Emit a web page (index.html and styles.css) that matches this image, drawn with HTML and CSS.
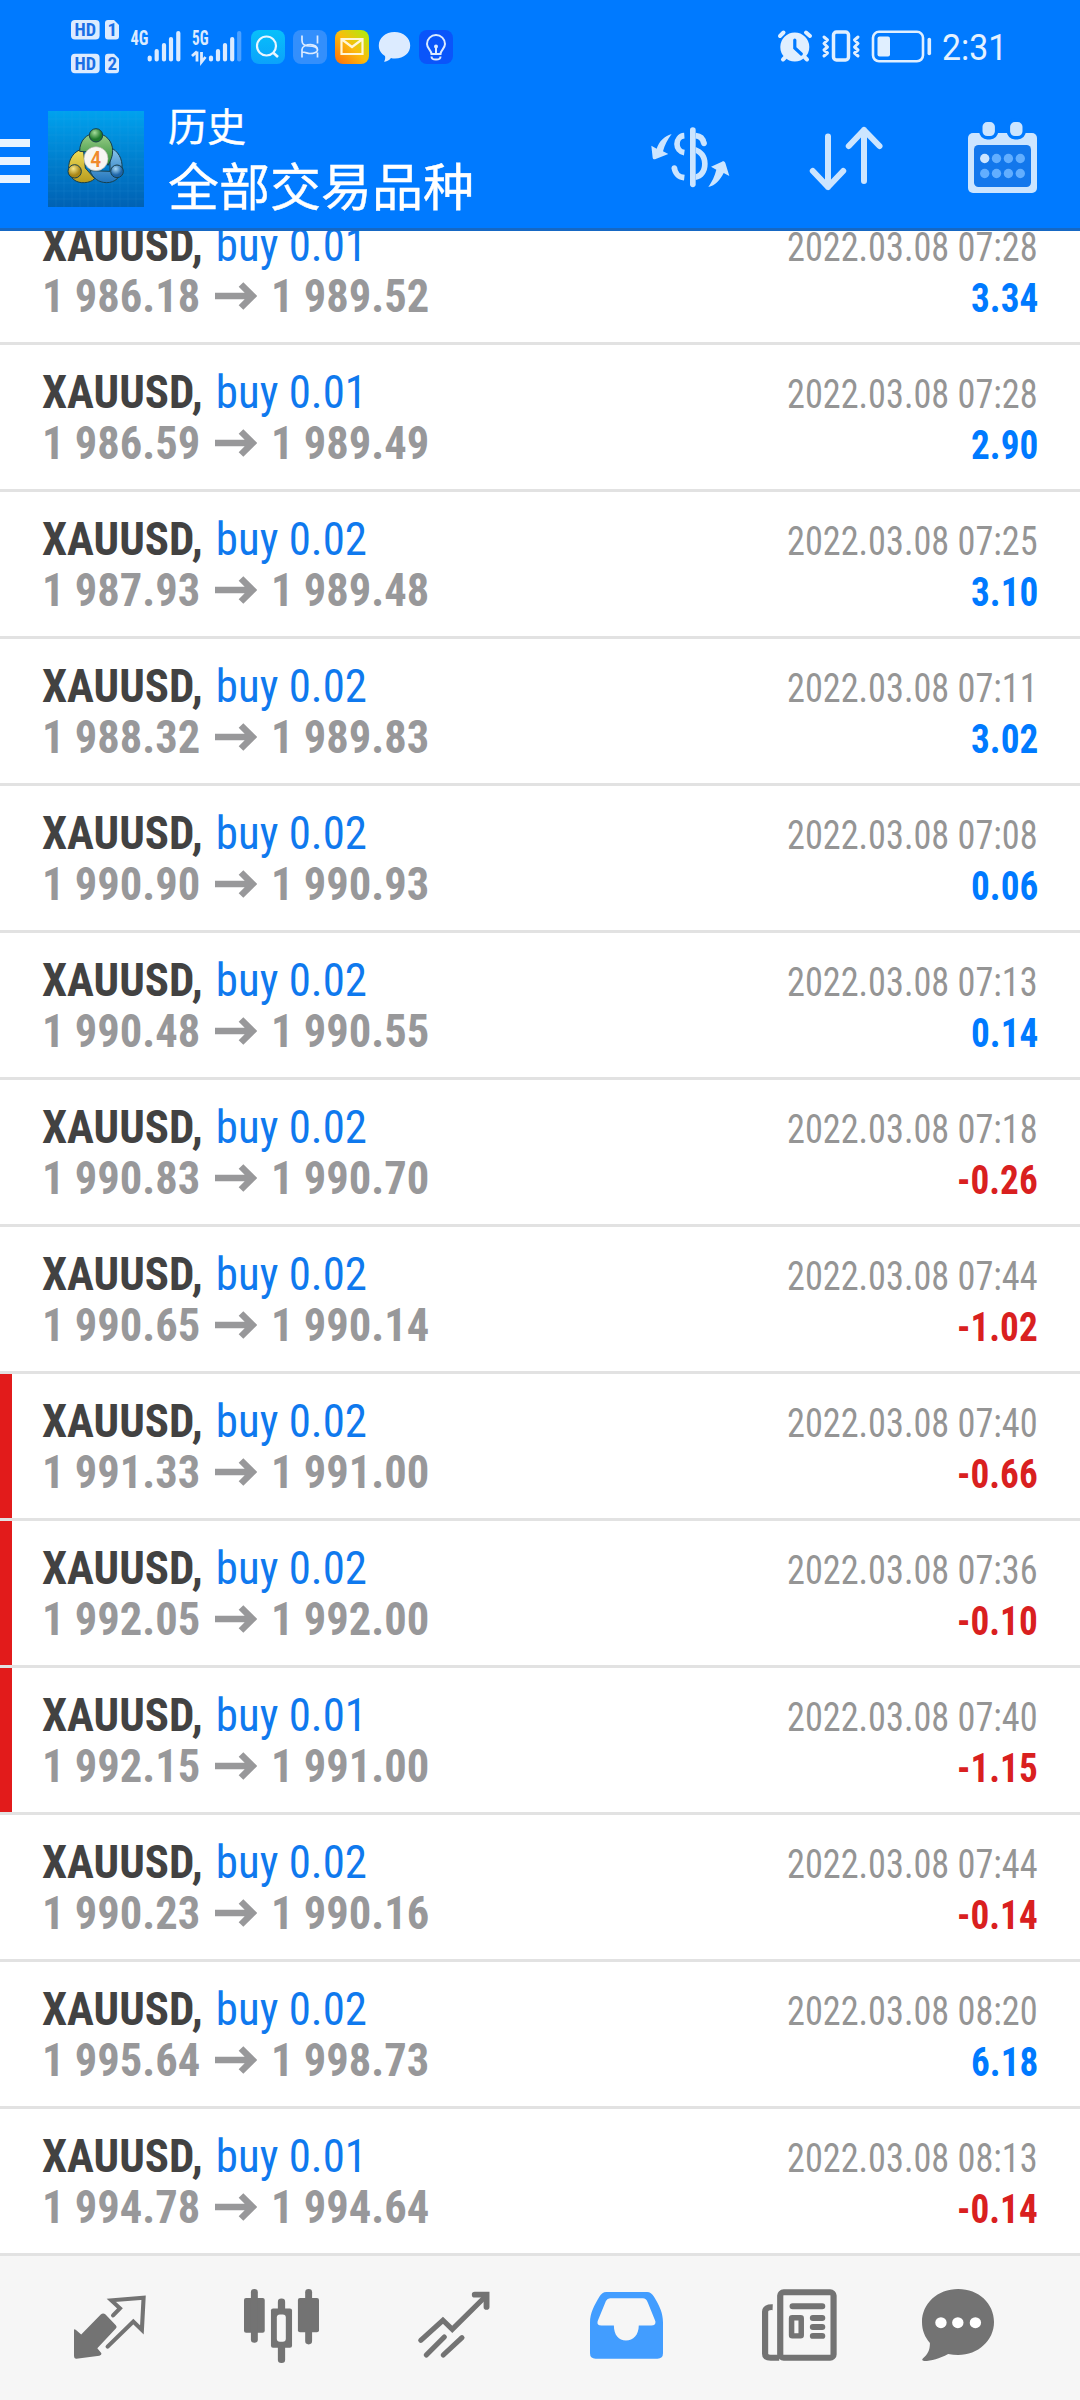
FILE: index.html
```html
<!DOCTYPE html>
<html lang="zh-CN">
<head>
<meta charset="utf-8">
<title>历史</title>
<link rel="stylesheet" href="styles.css">
</head>
<body>
<svg class="defs" aria-hidden="true">
  <symbol id="arrow" viewBox="0 0 42 28"><path d="M0 14H36M26 2.5L37.5 14L26 25.5" fill="none" stroke="#98989a" stroke-width="6.6"/></symbol>
</svg>
<header class="top">
  <div class="status">
    <svg class="hd" viewBox="71 20 48 54" width="48" height="54">
      <g fill="#dcebff"><rect x="71" y="20" width="28.6" height="19.5" rx="4"/><path d="M108 20h6l5 5v11.500a3 3 0 0 1-3 3h-8a3 3 0 0 1-3-3V23a3 3 0 0 1 3-3z"/><rect x="71" y="53.800" width="28.600" height="19.500" rx="4"/><path d="M108 53.800h6l5 5v11.500a3 3 0 0 1-3 3h-8a3 3 0 0 1-3-3V56.800a3 3 0 0 1 3-3z"/></g>
      <g class="badge"><text x="74.500" y="36.200" textLength="21.500" lengthAdjust="spacingAndGlyphs">HD</text><text x="107.500" y="36.200">1</text><text x="74.500" y="70" textLength="21.500" lengthAdjust="spacingAndGlyphs">HD</text><text x="107.500" y="70">2</text></g>
    </svg>
    <svg class="sig1" viewBox="130 30 52 32" width="52" height="32">
      <text class="net" x="130.500" y="45" textLength="18" lengthAdjust="spacingAndGlyphs">4G</text>
      <path class="bars" d="M149.700 57.500v2M156.700 51v8.500M164 45v14.500M171 39v20.500M178.300 33v26.500"/>
    </svg>
    <svg class="sig2" viewBox="191 30 52 33" width="52" height="33">
      <text class="net" x="192" y="45" textLength="16.500" lengthAdjust="spacingAndGlyphs">5G</text>
      <path class="bars" d="M211 57.500v2M218 51v8.500M225 45v14.500M232.200 39v20.500"/><path class="bars" opacity=".35" d="M239.200 33v26.500"/>
      <path d="M192 56l5-4.500M197 51.500v10M201.500 52v10l4-5" fill="none" stroke="#dcebff" stroke-width="2.800"/>
    </svg>
    <svg class="apps" viewBox="251 29 203 36" width="203" height="36">
      <defs>
        <linearGradient id="s1" x2="0" y2="1"><stop stop-color="#08c0fa"/><stop offset="1" stop-color="#0ba2fb"/></linearGradient>
        <linearGradient id="s2" x1="0" y1="1" x2="1" y2="0"><stop stop-color="#ff6a0a"/><stop offset=".5" stop-color="#fbbd0c"/><stop offset="1" stop-color="#a5f010"/></linearGradient>
      </defs>
      <rect x="251" y="30" width="34" height="34" rx="8" fill="url(#s1)"/>
      <circle cx="266.500" cy="46" r="9.500" fill="none" stroke="#eaf6ff" stroke-width="2.200"/><path d="M273 52.500l5 4.500" stroke="#eaf6ff" stroke-width="2.600"/>
      <rect x="293" y="30" width="34" height="34" rx="8" fill="#338ffc"/>
      <path d="M302 36v5c0 4 3 5.500 7 5.500 5 0 8.500 1 8.500 4.500M302 52.500c4 0 5 1.500 8 1.500s7.500-1 7.500-4-3-5-7-5-8.500 2-8.500 5v8M317.500 36v8M317.500 53v5" fill="none" stroke="#dcebff" stroke-width="1.700" transform="translate(0 -.5)"/>
      <rect x="335" y="30" width="34" height="34" rx="8" fill="url(#s2)"/>
      <path d="M341.500 39h21v15h-21zM342 39.500l10 7.500 10-7.500" fill="none" stroke="#fff6d8" stroke-width="2.200"/>
      <path d="M394.500 32c9 0 15.700 6 15.700 13.500S404 58.500 395 58.500c-1.500 0-3 0-4-.5-2 2.500-4.500 3.800-7 3.800 1-1.500 1.500-3.500 1-5.800-4-2.300-6.200-6-6.200-10.500C378.800 38 385.500 32 394.500 32z" fill="#dcebff"/>
      <rect x="419" y="30" width="34" height="34" rx="8" fill="#0a55fa"/>
      <path d="M431.500 54c0-3.500-4.500-5.500-4.500-10a9 9 0 0 1 18 0c0 4.500-4.500 6.500-4.500 10zM431.500 56.500c0 3 2 3 4.500 3s4.500 0 4.500-3M436 47v6" fill="none" stroke="#dcebff" stroke-width="2"/><circle cx="436" cy="46.500" r="2" fill="#dcebff"/>
    </svg>
    <svg class="sys" viewBox="778 29 154 35" width="154" height="35">
      <g fill="none" stroke="#e0efff" stroke-linecap="round">
        <circle cx="794.800" cy="47" r="14.500" fill="#e0efff" stroke="none"/>
        <path stroke-width="4" d="M780 36l3.500-3.500M806 32.500l4 3.500M783 59.500l2-2M807 59.500l-2-2"/>
        <path stroke="#007aff" stroke-width="3.200" d="M794.800 40v8l6.500 6"/>
        <rect x="833.500" y="32" width="15" height="28" rx="3" stroke-width="3.500"/>
        <path stroke-width="3" stroke-linejoin="round" d="M824 37l3.500 3-3.500 3.500 3.500 3.500-3.500 3 3.500 3-3.500 3M858 37l-3.500 3 3.500 3.500-3.500 3.500 3.500 3-3.500 3 3.500 3"/>
        <rect x="873" y="31.800" width="50" height="29.500" rx="6" stroke-width="2.600"/>
        <rect x="877.500" y="36.500" width="12.500" height="20" rx="2" fill="#e0efff" stroke="none"/>
        <path stroke-width="3.600" d="M929.300 39.500v14"/>
      </g>
    </svg>
    <time class="clock">2:31</time>
  </div>
  <div class="bar">
    <svg class="menu" width="30" height="44" viewBox="0 0 30 44"><path fill="#e9f4ff" d="M0 0h30v8H0zM0 18h30v8H0zM0 36h30v8H0z"/></svg>
    <svg class="logo" viewBox="24 21 288 288" width="96" height="96">
      <defs>
        <linearGradient id="bg" x2="0" y2="1"><stop stop-color="#00a2ee"/><stop offset=".5" stop-color="#0080cf"/><stop offset="1" stop-color="#0061b3"/></linearGradient>
        <linearGradient id="gr" x2="0" y2="1"><stop stop-color="#9ccf8a"/><stop offset="1" stop-color="#2c8a34"/></linearGradient>
        <linearGradient id="ye" x2="0" y2="1"><stop stop-color="#f1e05c"/><stop offset="1" stop-color="#b79a1c"/></linearGradient>
        <linearGradient id="bl" x2="0" y2="1"><stop stop-color="#8cc9ee"/><stop offset="1" stop-color="#1f72ba"/></linearGradient>
        <radialGradient id="gb" cx=".4" cy=".3"><stop stop-color="#a4dd9a"/><stop offset="1" stop-color="#1f7a2c"/></radialGradient>
        <radialGradient id="yb" cx=".4" cy=".3"><stop stop-color="#f7e88a"/><stop offset="1" stop-color="#a98616"/></radialGradient>
        <radialGradient id="bb" cx=".4" cy=".3"><stop stop-color="#a8d9f6"/><stop offset="1" stop-color="#1c64a8"/></radialGradient>
      </defs>
      <path fill="url(#bg)" d="M24 21h288v288H24z"/>
      <path stroke="#4ab5ea" stroke-opacity=".16" stroke-width="2" d="M48 21v288M72 21v288M96 21v288M120 21v288M144 21v288M168 21v288M192 21v288M216 21v288M240 21v288M264 21v288M288 21v288M24 45h288M24 69h288M24 93h288M24 117h288M24 141h288M24 165h288M24 189h288M24 213h288M24 237h288M24 261h288M24 285h288"/>
      <g stroke="#173f4c" stroke-width="3">
        <path fill="url(#bl)" d="M210 130c24 10 38 34 36 62-2 28-22 44-46 44-24 0-42-14-50-36l60 2z"/>
        <path fill="url(#ye)" d="M130 134c-28 6-46 32-44 62 2 28 24 42 48 40 12-1 22-4 30-12l-28-32z"/>
        <path fill="url(#gr)" d="M119 142c0-32 20-54 49-54s50 24 50 52c0 18-6 30-14 44l-16-36z"/>
        <circle cx="168" cy="94" r="20" fill="url(#gb)"/><circle cx="104" cy="202" r="20" fill="url(#yb)"/><circle cx="231" cy="202" r="19" fill="url(#bb)"/>
      </g>
      <circle cx="168" cy="164" r="36" fill="#f8f6f2" stroke="#b9b9b0" stroke-width="2"/>
      <text x="167" y="188" class="four">4</text>
    </svg>
    <div class="titles"><div class="t1">历史</div><div class="t2">全部交易品种</div></div>
    <svg class="money" viewBox="30 30 240 186" width="80" height="62" fill="none" stroke="#cce5ff" stroke-width="17">
      <path stroke-linecap="round" d="M158.500 42v163"/>
      <path d="M133 59c-14 1-22 13-22 25s8 24 22 26M103 154c1 16 12 29 30 31M167 59c13 1 22 8 24 22" />
      <path fill="#cce5ff" stroke="none" d="M167 93c22 8 36 24 36 50 0 28-14 44-36 49v-17c11-4 19-14 19-32 0-16-8-26-19-32zM95 54C72 62 58 75 50 98l-16-9 4 36c1 5 5 6 9 4l38-15-16-8c5-19 13-35 26-52zM205 213c21-4 36-22 46-42l17 9-12-39c-2-5-6-6-10-4l-33 15 16 9c-5 20-13 36-24 52z"/>
      <circle cx="103" cy="156" r="8" fill="#cce5ff" stroke="none"/><circle cx="192" cy="82" r="8.500" fill="#cce5ff" stroke="none"/>
    </svg>
    <svg class="sort" viewBox="809 126 75 65" width="75" height="65" fill="none" stroke="#cce5ff" stroke-width="6" stroke-linecap="round" stroke-linejoin="round"><path d="M828 136.500V187M812.800 171L828 187l15.200-16M864 181V130M848.800 146L864 130l15.500 16"/></svg>
    <svg class="cal" viewBox="968 121 69 72" width="69" height="72">
      <rect x="968" y="133" width="69" height="60" rx="5" fill="#cce5ff"/><rect x="974" y="145" width="57" height="42" rx="4.500" fill="#1277ec"/>
      <g fill="#cce5ff" stroke="#007aff" stroke-width="3.400"><rect x="980.800" y="120.300" width="15.800" height="17.500" rx="6.500"/><rect x="1008.400" y="120.300" width="15.800" height="17.500" rx="6.500"/></g>
      <g fill="#62aeff"><circle cx="984.700" cy="158.500" r="4.700" fill="#cce5ff"/><circle cx="996.500" cy="158.500" r="4.700"/><circle cx="1008.400" cy="158.500" r="4.700"/><circle cx="1020.300" cy="158.500" r="4.700"/><circle cx="984.700" cy="173.500" r="4.700"/><circle cx="996.500" cy="173.500" r="4.700"/><circle cx="1008.400" cy="173.500" r="4.700"/><circle cx="1020.300" cy="173.500" r="4.700"/></g>
    </svg>
  </div>
</header>
<main class="list">
  <article class="row"><div class="line"><p class="deal"><b>XAUUSD,</b> buy 0.01</p><time class="date">2022.03.08 07:28</time></div><div class="line"><p class="price"><span>1 986.18</span><svg><use href="#arrow"/></svg><span>1 989.52</span></p><b class="profit">3.34</b></div></article>
  <article class="row"><div class="line"><p class="deal"><b>XAUUSD,</b> buy 0.01</p><time class="date">2022.03.08 07:28</time></div><div class="line"><p class="price"><span>1 986.59</span><svg><use href="#arrow"/></svg><span>1 989.49</span></p><b class="profit">2.90</b></div></article>
  <article class="row"><div class="line"><p class="deal"><b>XAUUSD,</b> buy 0.02</p><time class="date">2022.03.08 07:25</time></div><div class="line"><p class="price"><span>1 987.93</span><svg><use href="#arrow"/></svg><span>1 989.48</span></p><b class="profit">3.10</b></div></article>
  <article class="row"><div class="line"><p class="deal"><b>XAUUSD,</b> buy 0.02</p><time class="date">2022.03.08 07:11</time></div><div class="line"><p class="price"><span>1 988.32</span><svg><use href="#arrow"/></svg><span>1 989.83</span></p><b class="profit">3.02</b></div></article>
  <article class="row"><div class="line"><p class="deal"><b>XAUUSD,</b> buy 0.02</p><time class="date">2022.03.08 07:08</time></div><div class="line"><p class="price"><span>1 990.90</span><svg><use href="#arrow"/></svg><span>1 990.93</span></p><b class="profit">0.06</b></div></article>
  <article class="row"><div class="line"><p class="deal"><b>XAUUSD,</b> buy 0.02</p><time class="date">2022.03.08 07:13</time></div><div class="line"><p class="price"><span>1 990.48</span><svg><use href="#arrow"/></svg><span>1 990.55</span></p><b class="profit">0.14</b></div></article>
  <article class="row"><div class="line"><p class="deal"><b>XAUUSD,</b> buy 0.02</p><time class="date">2022.03.08 07:18</time></div><div class="line"><p class="price"><span>1 990.83</span><svg><use href="#arrow"/></svg><span>1 990.70</span></p><b class="profit loss">-0.26</b></div></article>
  <article class="row"><div class="line"><p class="deal"><b>XAUUSD,</b> buy 0.02</p><time class="date">2022.03.08 07:44</time></div><div class="line"><p class="price"><span>1 990.65</span><svg><use href="#arrow"/></svg><span>1 990.14</span></p><b class="profit loss">-1.02</b></div></article>
  <article class="row stop"><div class="line"><p class="deal"><b>XAUUSD,</b> buy 0.02</p><time class="date">2022.03.08 07:40</time></div><div class="line"><p class="price"><span>1 991.33</span><svg><use href="#arrow"/></svg><span>1 991.00</span></p><b class="profit loss">-0.66</b></div></article>
  <article class="row stop"><div class="line"><p class="deal"><b>XAUUSD,</b> buy 0.02</p><time class="date">2022.03.08 07:36</time></div><div class="line"><p class="price"><span>1 992.05</span><svg><use href="#arrow"/></svg><span>1 992.00</span></p><b class="profit loss">-0.10</b></div></article>
  <article class="row stop"><div class="line"><p class="deal"><b>XAUUSD,</b> buy 0.01</p><time class="date">2022.03.08 07:40</time></div><div class="line"><p class="price"><span>1 992.15</span><svg><use href="#arrow"/></svg><span>1 991.00</span></p><b class="profit loss">-1.15</b></div></article>
  <article class="row"><div class="line"><p class="deal"><b>XAUUSD,</b> buy 0.02</p><time class="date">2022.03.08 07:44</time></div><div class="line"><p class="price"><span>1 990.23</span><svg><use href="#arrow"/></svg><span>1 990.16</span></p><b class="profit loss">-0.14</b></div></article>
  <article class="row"><div class="line"><p class="deal"><b>XAUUSD,</b> buy 0.02</p><time class="date">2022.03.08 08:20</time></div><div class="line"><p class="price"><span>1 995.64</span><svg><use href="#arrow"/></svg><span>1 998.73</span></p><b class="profit">6.18</b></div></article>
  <article class="row"><div class="line"><p class="deal"><b>XAUUSD,</b> buy 0.01</p><time class="date">2022.03.08 08:13</time></div><div class="line"><p class="price"><span>1 994.78</span><svg><use href="#arrow"/></svg><span>1 994.64</span></p><b class="profit loss">-0.14</b></div></article>
</main>
<nav class="tabs">
  <svg class="quotes" viewBox="215 164 210 191" preserveAspectRatio="none" width="72" height="64"><path fill="#737373" d="M293 222q7-6 14 0l30 32q5 5 0 10l-54 59 12 15q1 6-6 7l-67 9q-7 1-7-8v-78q0-4 5 0l16 14z"/><path fill="none" stroke="#737373" stroke-width="12" stroke-linecap="round" stroke-linejoin="miter" d="M329 225l20-21-25-24 94-8-5 96-25-25-75 75"/></svg>
  <svg class="charts" viewBox="709 147 217 223" preserveAspectRatio="none" width="75" height="74"><g fill="#737373"><rect x="709" y="174" width="60" height="105" rx="6"/><rect x="729" y="147" width="20" height="162" rx="10"/><rect x="865" y="174" width="61" height="103" rx="6"/><rect x="886" y="147" width="20" height="167" rx="10"/><rect x="787" y="206" width="61" height="118" rx="6"/><rect x="807" y="176" width="21" height="194" rx="10"/></g><rect x="804" y="224" width="26" height="82" rx="9" fill="#f6f6f6"/></svg>
  <svg class="trade" viewBox="1213 154 208 201" preserveAspectRatio="none" width="72" height="67" fill="none" stroke="#737373" stroke-width="15"><path stroke-linecap="round" d="M1221 302l64-60 27 27 98-101M1237 346l52-54M1286 346l54-52"/><path stroke-width="17" stroke-linecap="round" d="M1377 165h34v37"/></svg>
  <svg class="history" viewBox="146 155 211 200" preserveAspectRatio="none" width="73" height="67"><path fill="#429dff" fill-rule="evenodd" d="M193 155h118q12 0 20 14c17 28 26 50 26 76v93q0 16-16 16H162q-16 0-16-16v-93c0-26 12-50 27-76q8-14 20-14zM204 174q-8 0-12 8l-24 60q-3 13 11 13h36c0 28 14 45 35 45s37-17 37-45h36q14 0 12-13l-22-56q-5-12-14-12z"/></svg>
  <svg class="news" viewBox="646 146 218 218" preserveAspectRatio="none" width="75" height="72" fill="none" stroke="#737373" stroke-width="18"><rect x="699" y="156" width="155" height="198" rx="10"/><path d="M677 201q-22-1-22 14v127q0 12 16 12h25"/><path stroke-linecap="round" d="M735 198h86M794 234h27M794 261h27M794 288h27"/><rect x="732" y="233" width="28" height="55" rx="2" stroke-width="16"/></svg>
  <svg class="chat" viewBox="1109 147 209 216" preserveAspectRatio="none" width="72" height="72"><path fill="#737373" d="M1214 147c60 0 104 44 104 99s-46 99-104 99q-14 0-29-3c-26 14-48 21-70 21q-9-2-3-8c14-13 20-24 20-46-15-18-23-38-23-63 0-55 45-99 105-99z"/><g fill="#fff"><circle cx="1164" cy="248" r="16.500"/><circle cx="1213" cy="248" r="16.500"/><circle cx="1264" cy="248" r="16.500"/></g></svg>
</nav>
</body>
</html>
```
FILE: styles.css
```css
* { box-sizing: border-box; }
body { margin: 0; width: 1080px; height: 2400px; overflow: hidden; display: flex; flex-direction: column; background: #fff; font-family: "Roboto Condensed", Roboto, "Noto Sans CJK SC", sans-serif; }
p { margin: 0; }
svg { flex: none; display: block; overflow: visible; }
.defs { display: none; }

.top { flex: none; height: 231px; background: #007aff; border-bottom: 3px solid #1668c4; position: relative; z-index: 1; }
.status { height: 93px; display: flex; padding-left: 71px; align-items: flex-start; }
.hd { margin-top: 20px; }
.sig1 { margin: 30px 0 0 11px; }
.sig2 { margin: 30px 0 0 9px; }
.apps { margin: 29px 0 0 8px; }
.sys { margin: 29px 0 0 324px; }
.badge { font: 700 19px "Roboto Condensed", sans-serif; fill: #1a6fe6; }
.net { font: 700 20px "Roboto Condensed", sans-serif; fill: #dcebff; }
.bars { stroke: #dcebff; stroke-width: 4.2px; stroke-linecap: round; }
.clock { margin: 26px 0 0 10px; font: 400 36px/44px Roboto, sans-serif; color: #e6f2ff; transform: scaleX(.94); transform-origin: left; }

.bar { display: flex; align-items: flex-start; }
.menu { margin-top: 46px; }
.logo { margin: 18px 0 0 18px; }
.four { font: 500 66px "Roboto Condensed", sans-serif; fill: #f08a2c; text-anchor: middle; }
.titles { width: 480px; margin: 8px 0 0 24px; font-family: "Noto Sans CJK SC", sans-serif; color: #fff; white-space: nowrap; -webkit-text-stroke: .4px #fff; }
.t1 { font-size: 39px; line-height: 46px; }
.t2 { font-size: 51px; line-height: 74px; }
.money { margin: 33px 0 0 2px; }
.sort { margin: 33px 0 0 79px; }
.cal { margin: 28px 0 0 84px; }

.list { flex: none; height: 2025px; display: flex; flex-direction: column; justify-content: flex-end; }
.row { flex: none; height: 147px; padding: 21px 42px 0; border-bottom: 3px solid #e2e2e2; }
.stop { background: linear-gradient(#e21b1b, #e21b1b) 0 0 / 12px 144px no-repeat; }
.line { height: 51px; line-height: 51px; display: flex; justify-content: space-between; align-items: baseline; white-space: nowrap; }
.deal { font-size: 47px; color: #0f79ee; transform: scaleX(.955); transform-origin: left; }
.deal b { color: #424242; margin-right: 3px; }
.price { display: flex; align-items: baseline; font-size: 47px; font-weight: 700; color: #98989a; }
.price span { width: 173px; transform: scaleX(.947); transform-origin: left; }
.price svg { width: 42px; height: 28px; margin-right: 14px; position: relative; top: -2px; }
.date { font-size: 40px; color: #959595; transform: scaleX(.906); transform-origin: right; }
.profit { font-size: 40px; color: #007aff; transform: scaleX(.93); transform-origin: right; }
.loss { color: #d9201f; }

.tabs { flex: none; height: 144px; background: #f6f6f6; display: flex; align-items: flex-start; padding-left: 74px; }
.quotes { margin-top: 39px; }
.charts { margin: 33px 0 0 98px; }
.trade { margin: 35px 0 0 99px; }
.history { margin: 36px 0 0 100px; }
.news { margin: 33px 0 0 99px; }
.chat { margin: 33px 0 0 85px; }
```
